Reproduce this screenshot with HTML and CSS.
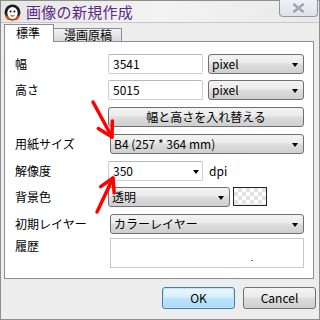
FILE: index.html
```html
<!DOCTYPE html>
<html lang="ja">
<head>
<meta charset="utf-8">
<link rel="stylesheet" href="styles.css">
</head>
<body>
<div class="window">
  <div class="titlebar">
    <svg class="appicon" width="17" height="17" viewBox="0 0 17 17">
      <circle cx="8.5" cy="8.5" r="8" fill="#1e1e1e"/>
      <path d="M2 11 Q8.5 18 15 11 L15 13 Q8.5 19 2 13 Z" fill="#e2541a"/>
      <ellipse cx="8.5" cy="9" rx="5.2" ry="6" fill="#fff"/>
      <circle cx="6.6" cy="7.5" r="1" fill="#111"/>
      <circle cx="10.4" cy="7.5" r="1" fill="#111"/>
      <path d="M6 11 Q8.5 15 11 11 Z" fill="#f07a22"/>
      <path d="M1.5 10 Q3 15 7 16 L4 16 Q1 14 1.5 10 Z" fill="#e2541a"/>
      <path d="M15.5 10 Q14 15 10 16 L13 16 Q16 14 15.5 10 Z" fill="#e2541a"/>
    </svg>
    <span class="title">画像の新規作成</span>
    <div class="close">
      <svg width="13" height="10" viewBox="0 0 13 10">
        <path d="M1.5 1 L11.5 9 M11.5 1 L1.5 9" stroke="#6e7688" stroke-width="2.2" fill="none"/>
        <path d="M1.5 1 L11.5 9 M11.5 1 L1.5 9" stroke="#d6dae3" stroke-width="0.8" fill="none"/>
      </svg>
    </div>
  </div>
  <div class="client">
    <div class="tabs">
      <div class="tab active">標準</div>
      <div class="tab other">漫画原稿</div>
    </div>
    <div class="panel">
      <div class="row r1">
        <span class="label">幅</span>
        <div class="input w95">3541</div>
        <div class="select unit"><span>pixel</span><i class="arrow"></i></div>
      </div>
      <div class="row r2">
        <span class="label">高さ</span>
        <div class="input w95">5015</div>
        <div class="select unit"><span>pixel</span><i class="arrow"></i></div>
      </div>
      <div class="row r3">
        <span class="label"></span>
        <div class="button swap">幅と高さを入れ替える</div>
      </div>
      <div class="row r4">
        <span class="label">用紙サイズ</span>
        <div class="select wide"><span>B4 (257 * 364 mm)</span><i class="arrow"></i></div>
      </div>
      <div class="row r5">
        <span class="label">解像度</span>
        <div class="input w95 combo"><span>350</span><i class="arrow"></i></div>
        <span class="dpi">dpi</span>
      </div>
      <div class="row r6">
        <span class="label">背景色</span>
        <div class="select bg"><span>透明</span><i class="arrow"></i></div>
        <div class="swatch"></div>
      </div>
      <div class="row r7">
        <span class="label">初期レイヤー</span>
        <div class="select wide"><span>カラーレイヤー</span><i class="arrow"></i></div>
      </div>
      <div class="row r8">
        <span class="label">履歴</span>
        <div class="history"><i class="dot"></i></div>
      </div>
    </div>
    <div class="footer">
      <div class="button ok">OK</div>
      <div class="button cancel">Cancel</div>
    </div>
  </div>
  <svg class="arrows" width="320" height="320" viewBox="0 0 320 320">
    <g stroke="#ff0000" stroke-width="3.5" stroke-linecap="round" stroke-linejoin="round" fill="none">
      <path d="M93 102 L112 137"/>
      <path d="M112.4 121 L112 137 L98.3 128.6"/>
      <path d="M97 212 L113 178"/>
      <path d="M100.7 186.6 L113 178 L114.2 193"/>
    </g>
  </svg>
</div>
</body>
</html>
```
FILE: styles.css
```css
* { box-sizing: border-box; }
html, body { margin: 0; padding: 0; }
body {
  width: 320px;
  height: 320px;
  overflow: hidden;
  font-family: "Noto Sans CJK JP", "Noto Sans", sans-serif;
  font-size: 12px;
  color: #000;
  background: #fff;
}
.window {
  position: relative;
  width: 320px;
  height: 320px;
  border: 1px solid #8e8e8e;
  background: #ededed;
  display: flex;
  flex-direction: column;
}
.titlebar {
  height: 21px;
  display: flex;
  align-items: center;
  padding-left: 3px;
  background: linear-gradient(90deg, #e6e6e6 0%, #f3f3f3 50%, #e9e9e9 100%);
}
.appicon { flex: none; margin-top: 1px; }
.title {
  margin-left: 5px;
  font-size: 15px;
  line-height: 20px;
  color: #5b2a86;
  letter-spacing: 0.3px;
}
.close {
  margin-left: auto;
  align-self: flex-start;
  margin-top: -1px;
  margin-right: 1px;
  width: 39px;
  height: 17px;
  border: 1px solid #8f96a3;
  border-top: none;
  border-radius: 0 0 4px 4px;
  background: linear-gradient(#eef0f4, #dfe2e8);
  display: flex;
  align-items: center;
  justify-content: center;
}
.client {
  flex: 1;
  display: flex;
  flex-direction: column;
  padding: 1px 5px 0 3px;
  border-top: 1px solid #c8c8c8;
}
.tabs {
  height: 17px;
  display: flex;
  align-items: flex-end;
}
.tab {
  flex: none;
  white-space: nowrap;
  height: 13px;
  border: 1px solid #8a8d95;
  border-bottom: none;
  background: linear-gradient(#f2f2f2, #dadada);
  line-height: 12px;
  font-size: 12px;
  display: flex;
  align-items: center;
}
.tab.active {
  height: 18px;
  margin-bottom: -1px;
  width: 50px;
  padding-left: 11px;
  background: #fff;
  position: relative;
  z-index: 1;
  align-items: flex-start;
  padding-top: 2px;
}
.tab.other {
  width: 68px;
  padding-left: 10px;
  border-left: none;
}
.panel {
  height: 238px;
  border: 1px solid #8a8d95;
  background: #fff;
  padding: 12px 0 0 10px;
}
.row {
  display: flex;
  align-items: center;
  height: 20px;
}
.r2 { margin-top: 6px; }
.r3 { margin-top: 7px; }
.r4 { margin-top: 7px; }
.r5 { margin-top: 7px; }
.r6 { margin-top: 6px; }
.r7 { margin-top: 7px; }
.r8 { margin-top: 4px; height: 30px; align-items: flex-start; }
.label {
  flex: none;
  width: 93px;
  line-height: 20px;
}
.r8 .label { line-height: 14px; margin-top: 1px; }
.input {
  height: 20px;
  border: 1px solid #c9ced7;
  border-top-color: #b3b8c2;
  border-radius: 2px;
  background: #fff;
  padding-left: 4px;
  line-height: 18px;
  display: flex;
  align-items: center;
}
.w95 { width: 95px; }
.combo { padding-right: 3px; }
.select, .button {
  height: 20px;
  border: 1px solid #707070;
  border-radius: 3px;
  background: linear-gradient(#f3f3f3 0%, #ebebeb 45%, #dddddd 50%, #cfcfcf 100%);
  display: flex;
  align-items: center;
  line-height: 18px;
}
.select { padding-left: 3px; padding-right: 5px; }
.select span, .combo span { flex: 1; }
.unit { width: 96px; margin-left: 5px; }
.wide { width: 194px; margin-left: 2px; }
.bg { width: 122px; }
.arrow {
  width: 0;
  height: 0;
  border-left: 3.5px solid transparent;
  border-right: 3.5px solid transparent;
  border-top: 4px solid #000;
  margin-top: 1px;
}
.dpi { margin-left: 6px; line-height: 20px; }
.swatch {
  width: 34px;
  height: 19px;
  margin-left: 3px;
  border: 1px solid #222;
  background-color: #fff;
  background-image:
    linear-gradient(45deg, #e2e2e2 25%, transparent 25%, transparent 75%, #e2e2e2 75%),
    linear-gradient(45deg, #e2e2e2 25%, transparent 25%, transparent 75%, #e2e2e2 75%);
  background-size: 8px 8px;
  background-position: 0 0, 4px 4px;
  align-self: flex-start;
}
.button {
  justify-content: center;
}
.swap { width: 196px; }
.history {
  position: relative;
  width: 194px;
  height: 30px;
  margin-left: 2px;
  border: 1px solid #c6c9cf;
  background: #fff;
}
.dot {
  position: absolute;
  left: 140px;
  top: 21px;
  width: 2px;
  height: 1px;
  background: #777;
}
.footer {
  display: flex;
  justify-content: flex-end;
  gap: 8px;
  padding-top: 8px;
  margin-right: -2px;
}
.footer .button {
  width: 73px;
  height: 22px;
  line-height: 20px;
}
.ok {
  border-color: #3c7fb1;
  box-shadow: inset 0 0 0 1px #c5e4f7;
  background: linear-gradient(#eaf6fd 0%, #d9f0fc 45%, #bee6fd 50%, #a7d9f5 100%);
}
.arrows {
  position: absolute;
  left: -1px;
  top: -1px;
  pointer-events: none;
}
```
